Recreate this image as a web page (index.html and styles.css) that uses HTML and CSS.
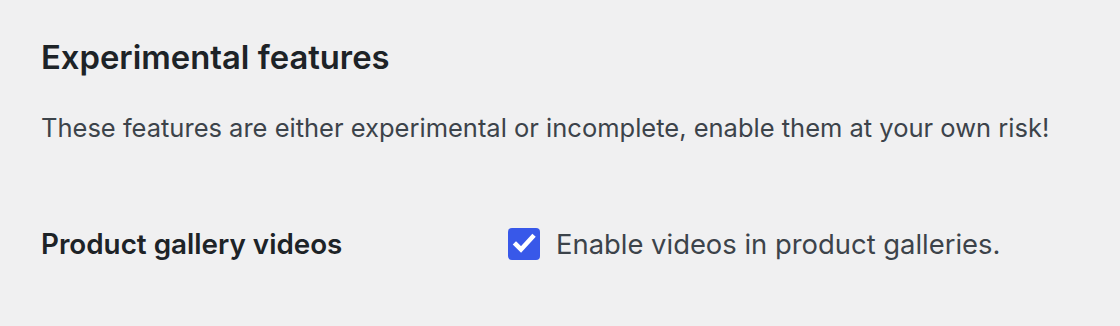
FILE: index.html
```html
<!DOCTYPE html>
<html>
<head>
<meta charset="utf-8">
<link rel="stylesheet" href="styles.css">
</head>
<body>
<div class="page">
  <h2 class="title">Experimental features</h2>
  <p class="desc">These features are either experimental or incomplete, enable them at your own risk!</p>
  <div class="row">
    <div class="row-label">Product gallery videos</div>
    <label class="field">
      <span class="checkbox">
        <svg viewBox="0 0 32 32" width="32" height="32"><path d="M8 16.5 L13 21.5 L24.5 9" fill="none" stroke="#fff" stroke-width="4.6" stroke-linecap="square" stroke-linejoin="miter"/></svg>
      </span>
      <span class="field-text">Enable videos in product galleries.</span>
    </label>
  </div>
</div>
</body>
</html>
```

FILE: styles.css
```css
html, body {
  margin: 0;
  padding: 0;
  background: #f0f0f1;
}
body {
  font-family: Inter, "Noto Sans", sans-serif;
  color: #3c434a;
}
.page {
  padding: 37px 41px 0;
}
.title {
  margin: 0;
  font-size: 32.8px;
  font-weight: 600;
  color: #1d2327;
  line-height: 40px;
}
.desc {
  margin: 34px 0 0;
  font-size: 25.5px;
  line-height: 34px;
}
.row {
  display: flex;
  align-items: center;
  margin-top: 82px;
}
.row-label {
  width: 467px;
  font-size: 27.8px;
  line-height: 34px;
  font-weight: 600;
  color: #1d2327;
}
.field {
  display: flex;
  align-items: center;
  gap: 16px;
}
.checkbox {
  width: 32px;
  height: 32px;
  border-radius: 4px;
  background: #3858e9;
  display: block;
}
.checkbox svg { display: block; }
.field-text {
  font-size: 27.4px;
  line-height: 34px;
}
```
